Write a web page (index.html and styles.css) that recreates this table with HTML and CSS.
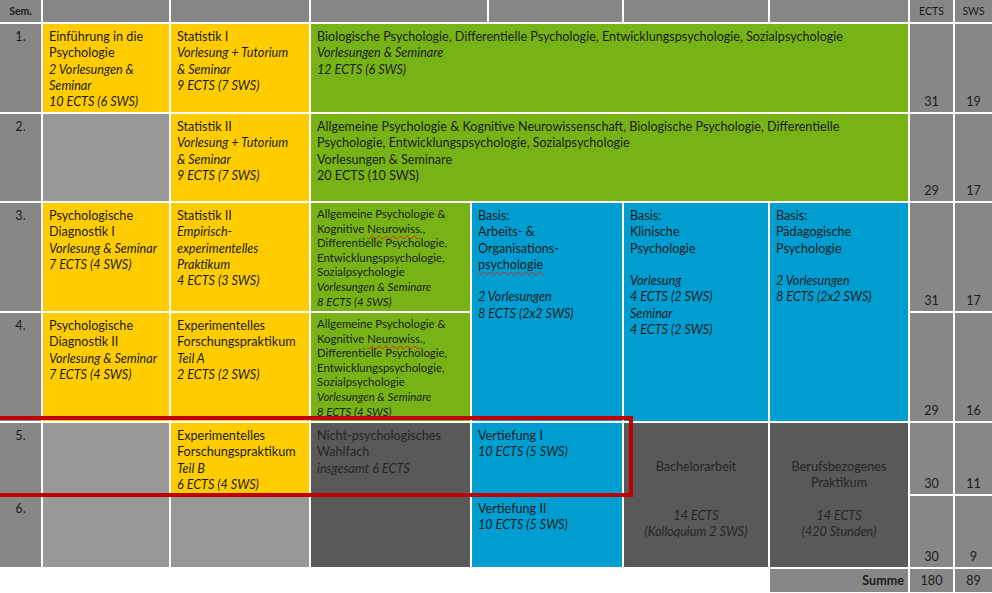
FILE: index.html
```html
<!DOCTYPE html>
<html lang="de">
<head>
<meta charset="utf-8">
<title>Studienverlaufsplan</title>
<link rel="stylesheet" href="styles.css">
</head>
<body>
<div class="sheet">
  <div class="hdr">
    <div class="h h-sem">Sem.</div>
    <div class="h"></div>
    <div class="h"></div>
    <div class="h"></div>
    <div class="h"></div>
    <div class="h"></div>
    <div class="h"></div>
    <div class="h h-lab">ECTS</div>
    <div class="h h-lab">SWS</div>
  </div>

  <div class="grid">
    <!-- Semester 1 -->
    <div class="sem">1.</div>
    <div class="c y">Einführung in die<br>Psychologie<br><i>2 Vorlesungen &amp;<br>Seminar<br>10 ECTS (6 SWS)</i></div>
    <div class="c y">Statistik I<br><i>Vorlesung + Tutorium<br>&amp; Seminar<br>9 ECTS (7 SWS)</i></div>
    <div class="c g span4">Biologische Psychologie, Differentielle Psychologie, Entwicklungspsychologie, Sozialpsychologie<br><i>Vorlesungen &amp; Seminare<br>12 ECTS (6 SWS)</i></div>
    <div class="num">31</div>
    <div class="num">19</div>

    <!-- Semester 2 -->
    <div class="sem">2.</div>
    <div class="c e"></div>
    <div class="c y">Statistik II<br><i>Vorlesung + Tutorium<br>&amp; Seminar<br>9 ECTS (7 SWS)</i></div>
    <div class="c g span4">Allgemeine Psychologie &amp; Kognitive Neurowissenschaft, Biologische Psychologie, Differentielle<br>Psychologie, Entwicklungspsychologie, Sozialpsychologie<br>Vorlesungen &amp; Seminare<br>20 ECTS (10 SWS)</div>
    <div class="num">29</div>
    <div class="num">17</div>

    <!-- Semester 3 -->
    <div class="sem">3.</div>
    <div class="c y">Psychologische<br>Diagnostik I<br><i>Vorlesung &amp; Seminar<br>7 ECTS (4 SWS)</i></div>
    <div class="c y">Statistik II<br><i>Empirisch-<br>experimentelles<br>Praktikum<br>4 ECTS (3 SWS)</i></div>
    <div class="c g small">Allgemeine Psychologie &amp;<br>Kognitive <span class="sp">Neurowiss</span>.,<br>Differentielle Psychologie,<br>Entwicklungspsychologie,<br>Sozialpsychologie<br><i>Vorlesungen &amp; Seminare<br>8 ECTS (4 SWS)</i></div>
    <div class="c b rspan2">Basis:<br>Arbeits- &amp;<br>Organisations-<br><span class="sp">psychologie</span><br><br><i>2 Vorlesungen<br>8 ECTS (2x2 SWS)</i></div>
    <div class="c b rspan2">Basis:<br>Klinische<br>Psychologie<br><br><i>Vorlesung<br>4 ECTS (2 SWS)<br>Seminar<br>4 ECTS (2 SWS)</i></div>
    <div class="c b rspan2">Basis:<br>Pädagogische<br>Psychologie<br><br><i>2 Vorlesungen<br>8 ECTS (2x2 SWS)</i></div>
    <div class="num">31</div>
    <div class="num">17</div>

    <!-- Semester 4 -->
    <div class="sem">4.</div>
    <div class="c y">Psychologische<br>Diagnostik II<br><i>Vorlesung &amp; Seminar<br>7 ECTS (4 SWS)</i></div>
    <div class="c y">Experimentelles<br>Forschungspraktikum<br><i>Teil A<br>2 ECTS (2 SWS)</i></div>
    <div class="c g small">Allgemeine Psychologie &amp;<br>Kognitive <span class="sp">Neurowiss</span>.,<br>Differentielle Psychologie,<br>Entwicklungspsychologie,<br>Sozialpsychologie<br><i>Vorlesungen &amp; Seminare<br>8 ECTS (4 SWS)</i></div>
    <div class="num">29</div>
    <div class="num">16</div>

    <!-- Semester 5 -->
    <div class="sem">5.</div>
    <div class="c e"></div>
    <div class="c y">Experimentelles<br>Forschungspraktikum<br><i>Teil B<br>6 ECTS (4 SWS)</i></div>
    <div class="c d rspan2">Nicht-psychologisches<br>Wahlfach<br><i>insgesamt 6 ECTS</i></div>
    <div class="c b">Vertiefung I<br><i>10 ECTS (5 SWS)</i></div>
    <div class="c d rspan2 center">Bachelorarbeit<br><br><br><i>14 ECTS<br>(Kolloquium 2 SWS)</i></div>
    <div class="c d rspan2 center">Berufsbezogenes<br>Praktikum<br><br><i>14 ECTS<br>(420 Stunden)</i></div>
    <div class="num">30</div>
    <div class="num">11</div>

    <!-- Semester 6 -->
    <div class="sem">6.</div>
    <div class="c e"></div>
    <div class="c e"></div>
    <div class="c b">Vertiefung II<br><i>10 ECTS (5 SWS)</i></div>
    <div class="num">30</div>
    <div class="num">9</div>
  </div>

  <div class="sumrow">
    <div class="sum-label">Summe</div>
    <div class="sum-val">180</div>
    <div class="sum-val">89</div>
  </div>

  <div class="redbox"></div>
</div>
</body>
</html>
```

FILE: styles.css
```css
html, body {
  margin: 0;
  padding: 0;
  background: #ffffff;
}

.sheet {
  position: relative;
  width: 992px;
  display: flex;
  flex-direction: column;
  gap: 2px;
  font-family: "Lato", "Liberation Sans", sans-serif;
  color: #1c1c1c;
}

/* header */
.hdr {
  display: grid;
  grid-template-columns: 41px 126px 138px 176px 133px 144px 138px 43px 37px;
  gap: 2px;
  height: 22px;
}

.h {
  background: #878787;
  display: flex;
  align-items: center;
  justify-content: center;
  font-size: 10.5px;
}

.h-sem {
  font-weight: bold;
}

/* body grid */
.grid {
  display: grid;
  grid-template-columns: 41px 126px 138px 159px 150px 144px 138px 43px 37px;
  grid-template-rows: 88px 87px 108px 108px 71px 71px;
  gap: 2px;
}

.sem {
  background: #878787;
  text-align: center;
  font-size: 12.6px;
  line-height: 16.3px;
  padding-top: 5px;
}

.num {
  background: #878787;
  display: flex;
  align-items: flex-end;
  justify-content: center;
  font-size: 12.6px;
  line-height: 16.3px;
  padding-bottom: 2px;
}

.c {
  padding: 5px 6px 0;
  font-size: 12.6px;
  line-height: 16.3px;
  white-space: nowrap;
  overflow: visible;
}

.c i {
  font-style: italic;
}

.y { background: #ffcc00; }
.g { background: #77b316; }
.b { background: #009ed0; }
.d { background: #595959; color: #262626; }
.e { background: #989898; }

.small {
  font-size: 11.4px;
  line-height: 14.6px;
  padding-top: 4px;
}

.span4 { grid-column: span 4; }
.rspan2 { grid-row: span 2; }

.center {
  text-align: center;
  padding-top: 36px;
}

.sp {
  text-decoration: underline wavy #e02020;
  text-decoration-thickness: 1px;
  text-decoration-skip-ink: none;
  text-underline-offset: 2px;
}

/* sum row */
.sumrow {
  display: grid;
  grid-template-columns: 41px 126px 138px 159px 150px 144px 138px 43px 37px;
  gap: 2px;
  height: 23px;
  font-size: 12.6px;
}

.sum-label {
  grid-column: 7;
  background: #878787;
  font-weight: bold;
  display: flex;
  align-items: center;
  justify-content: flex-end;
  padding-right: 4px;
}

.sum-val {
  background: #878787;
  display: flex;
  align-items: center;
  justify-content: center;
}

/* highlight frame over semester 5 */
.redbox {
  position: absolute;
  left: -10px;
  top: 416px;
  width: 643px;
  height: 81px;
  border: 4px solid #c00000;
  box-sizing: border-box;
  pointer-events: none;
}
```
